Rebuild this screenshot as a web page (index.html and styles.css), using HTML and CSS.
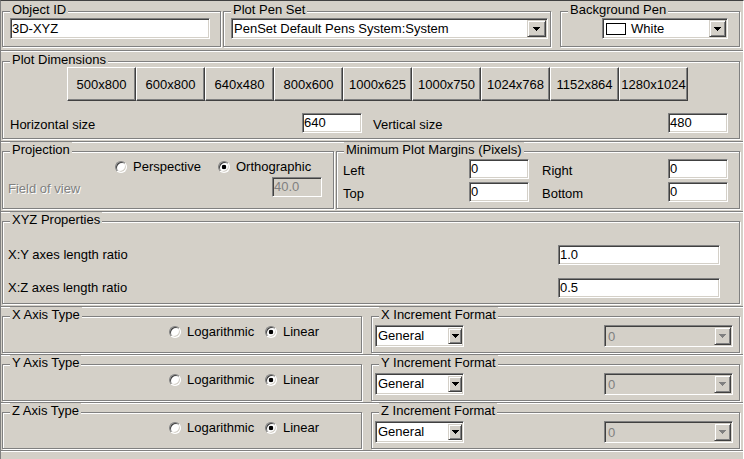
FILE: index.html
```html
<!DOCTYPE html>
<html>
<head>
<meta charset="utf-8">
<title>3D-XYZ Plot Properties</title>
<link rel="stylesheet" href="styles.css">
</head>
<body>
<div class="dialog">

  <div class="row r1">
    <div class="group g-objid">
      <div class="legend">Object ID</div>
      <div class="edit e-objid">3D-XYZ</div>
    </div>
    <div class="group g-penset">
      <div class="legend">Plot Pen Set</div>
      <div class="combo c-penset">
        <span class="val">PenSet Default Pens System:System</span>
        <span class="dd dd-18"><svg class="arrow" width="7" height="4" viewBox="0 0 7 4"><path d="M0 0h7v1H0zM1 1h5v1H1zM2 2h3v1H2zM3 3h1v1H3z"/></svg></span>
      </div>
    </div>
    <div class="group g-bgpen">
      <div class="legend">Background Pen</div>
      <div class="combo c-bgpen">
        <span class="val"><span class="swatch"></span>White</span>
        <span class="dd"><svg class="arrow" width="7" height="4" viewBox="0 0 7 4"><path d="M0 0h7v1H0zM1 1h5v1H1zM2 2h3v1H2zM3 3h1v1H3z"/></svg></span>
      </div>
    </div>
  </div>

  <div class="row r2">
    <div class="group g-full">
      <div class="legend">Plot Dimensions</div>
      <div class="btnrow">
        <div class="pbtn">500x800</div>
        <div class="pbtn">600x800</div>
        <div class="pbtn">640x480</div>
        <div class="pbtn">800x600</div>
        <div class="pbtn">1000x625</div>
        <div class="pbtn">1000x750</div>
        <div class="pbtn">1024x768</div>
        <div class="pbtn">1152x864</div>
        <div class="pbtn">1280x1024</div>
      </div>
      <div class="srow">
        <span class="lbl l-h">Horizontal size</span>
        <div class="edit e-size">640</div>
        <span class="lbl l-v">Vertical size</span>
        <div class="edit e-size">480</div>
      </div>
    </div>
  </div>

  <div class="row r3">
    <div class="group g-proj">
      <div class="legend">Projection</div>
      <div class="radios proj-radios">
        <span class="ritem r-persp"><span class="radio"></span>Perspective</span>
        <span class="ritem"><span class="radio on"></span>Orthographic</span>
      </div>
      <div class="fov">
        <span class="lbl disabled l-fov">Field of view</span>
        <div class="edit e-fov off">40.0</div>
      </div>
    </div>
    <div class="group g-marg">
      <div class="legend">Minimum Plot Margins (Pixels)</div>
      <div class="mrow ma">
        <span class="lbl l-m">Left</span>
        <div class="edit e-size">0</div>
        <span class="lbl l-m l-m2">Right</span>
        <div class="edit e-size">0</div>
      </div>
      <div class="mrow mb">
        <span class="lbl l-m">Top</span>
        <div class="edit e-size">0</div>
        <span class="lbl l-m l-m2">Bottom</span>
        <div class="edit e-size">0</div>
      </div>
    </div>
  </div>

  <div class="row r4">
    <div class="group g-full">
      <div class="legend">XYZ Properties</div>
      <div class="xrow xa">
        <span class="lbl l-x">X:Y axes length ratio</span>
        <div class="edit e-ratio">1.0</div>
      </div>
      <div class="xrow xb">
        <span class="lbl l-x">X:Z axes length ratio</span>
        <div class="edit e-ratio">0.5</div>
      </div>
    </div>
  </div>

  <div class="row r-axis">
    <div class="group g-axis">
      <div class="legend">X Axis Type</div>
      <div class="radios axis-radios">
        <span class="ritem r-log"><span class="radio"></span>Logarithmic</span>
        <span class="ritem"><span class="radio on"></span>Linear</span>
      </div>
    </div>
    <div class="group g-inc">
      <div class="legend">X Increment Format</div>
      <div class="inc-row">
        <div class="combo c-gen">
          <span class="val">General</span>
          <span class="dd dd-14"><svg class="arrow" width="7" height="4" viewBox="0 0 7 4"><path d="M0 0h7v1H0zM1 1h5v1H1zM2 2h3v1H2zM3 3h1v1H3z"/></svg></span>
        </div>
        <div class="combo c-dis off">
          <span class="val">0</span>
          <span class="dd"><svg class="arrow" width="7" height="4" viewBox="0 0 7 4"><path d="M0 0h7v1H0zM1 1h5v1H1zM2 2h3v1H2zM3 3h1v1H3z"/></svg></span>
        </div>
      </div>
    </div>
  </div>

  <div class="row r-axis">
    <div class="group g-axis">
      <div class="legend">Y Axis Type</div>
      <div class="radios axis-radios">
        <span class="ritem r-log"><span class="radio"></span>Logarithmic</span>
        <span class="ritem"><span class="radio on"></span>Linear</span>
      </div>
    </div>
    <div class="group g-inc">
      <div class="legend">Y Increment Format</div>
      <div class="inc-row">
        <div class="combo c-gen">
          <span class="val">General</span>
          <span class="dd dd-14"><svg class="arrow" width="7" height="4" viewBox="0 0 7 4"><path d="M0 0h7v1H0zM1 1h5v1H1zM2 2h3v1H2zM3 3h1v1H3z"/></svg></span>
        </div>
        <div class="combo c-dis off">
          <span class="val">0</span>
          <span class="dd"><svg class="arrow" width="7" height="4" viewBox="0 0 7 4"><path d="M0 0h7v1H0zM1 1h5v1H1zM2 2h3v1H2zM3 3h1v1H3z"/></svg></span>
        </div>
      </div>
    </div>
  </div>

  <div class="row r-axis">
    <div class="group g-axis">
      <div class="legend">Z Axis Type</div>
      <div class="radios axis-radios">
        <span class="ritem r-log"><span class="radio"></span>Logarithmic</span>
        <span class="ritem"><span class="radio on"></span>Linear</span>
      </div>
    </div>
    <div class="group g-inc">
      <div class="legend">Z Increment Format</div>
      <div class="inc-row">
        <div class="combo c-gen">
          <span class="val">General</span>
          <span class="dd dd-14"><svg class="arrow" width="7" height="4" viewBox="0 0 7 4"><path d="M0 0h7v1H0zM1 1h5v1H1zM2 2h3v1H2zM3 3h1v1H3z"/></svg></span>
        </div>
        <div class="combo c-dis off">
          <span class="val">0</span>
          <span class="dd"><svg class="arrow" width="7" height="4" viewBox="0 0 7 4"><path d="M0 0h7v1H0zM1 1h5v1H1zM2 2h3v1H2zM3 3h1v1H3z"/></svg></span>
        </div>
      </div>
    </div>
  </div>

  <div class="row r-end"></div>
</div>
</body>
</html>
```

FILE: styles.css
```css
* { box-sizing: border-box; }

html, body {
  margin: 0;
  padding: 0;
}

body {
  width: 744px;
  height: 459px;
  overflow: hidden;
  background: #D4D0C8;
  color: #000;
  font-family: "Liberation Sans", Arial, sans-serif;
  font-size: 13px;
}

.dialog {
  height: 459px;
  display: flex;
  flex-direction: column;
  border-top: 1px solid #404040;
  border-left: 1px solid #808080;
  border-right: 1px solid #ffffff;
}

/* ---------- rows ---------- */
.row {
  display: flex;
  flex: none;
  padding: 9px 3px 2px 1px;
  border-top: 1px solid #808080;
  box-shadow: inset 0 1px 0 #ffffff;
}
.r1 { height: 49px; padding-top: 10px; padding-bottom: 3px; border-top: none; box-shadow: none; }
.r2 { height: 91px; padding-top: 10px; }
.r3 { height: 70px; }
.r4 { height: 95px; }
.r-axis { height: 48px; padding-bottom: 1px; }
.r-end { flex: 1; }

/* ---------- group boxes ---------- */
.group {
  display: flex;
  flex-direction: column;
  border: 1px solid #808080;
  box-shadow: inset 1px 1px 0 #ffffff, 1px 1px 0 #ffffff;
}
.legend {
  align-self: flex-start;
  height: 15px;
  line-height: 15px;
  margin: -10px 0 0 7px;
  padding: 0 2px;
  background: #D4D0C8;
  white-space: nowrap;
}

.g-objid { width: 219px; }
.g-penset { width: 328px; margin-left: 2px; }
.g-bgpen { width: 180px; margin-left: 9px; }
.g-full { flex: 1; }
.g-proj { width: 332px; }
.g-marg { width: 404px; margin-left: 2px; }
.g-axis { width: 360px; }
.g-inc { width: 369px; margin-left: 9px; }

/* ---------- edit boxes ---------- */
.edit {
  flex: none;
  height: 20px;
  line-height: 18px;
  padding: 0 1px;
  background: #ffffff;
  border: 1px solid;
  border-color: #808080 #ffffff #ffffff #808080;
  box-shadow: inset 1px 1px 0 #404040, inset -1px -1px 0 #D4D0C8;
  white-space: nowrap;
  overflow: hidden;
}
.edit.off {
  background: #D4D0C8;
  color: #808080;
}
.e-objid { width: 200px; height: 21px; line-height: 19px; margin: 1px 0 0 7px; }
.e-size { width: 60px; }
.e-fov { width: 50px; }
.e-ratio { width: 162px; }

/* ---------- combo boxes ---------- */
.combo {
  flex: none;
  display: flex;
  height: 21px;
  padding: 1px;
  background: #ffffff;
  border: 1px solid;
  border-color: #808080 #ffffff #ffffff #808080;
  box-shadow: inset 1px 1px 0 #404040, inset -1px -1px 0 #D4D0C8;
}
.combo .val {
  flex: 1;
  display: flex;
  align-items: center;
  line-height: 17px;
  padding-left: 1px;
  white-space: nowrap;
  overflow: hidden;
}
.dd {
  flex: none;
  width: 17px;
  display: flex;
  align-items: center;
  justify-content: center;
  background: #D4D0C8;
  border: 1px solid;
  border-color: #D4D0C8 #404040 #404040 #D4D0C8;
  box-shadow: inset 1px 1px 0 #ffffff, inset -1px -1px 0 #808080;
}
.dd-18 { width: 19px; }
.dd-14 { width: 14px; height: 16px; align-self: center; }
.arrow { display: block; fill: #000; shape-rendering: crispEdges; }

.c-penset { width: 317px; margin: 1px 0 0 7px; }
.c-bgpen { width: 126px; margin: 1px 0 0 41px; }
.c-bgpen .val { padding-left: 2px; }
.swatch {
  width: 20px;
  height: 12px;
  margin-right: 5px;
  border: 1px solid #000;
  background: #fff;
}
.c-gen { width: 89px; height: 22px; }
.c-gen .val { line-height: 18px; padding-left: 1px; }
.c-dis { width: 129px; height: 22px; background: #D4D0C8; }
.c-dis .val { color: #808080; padding-left: 2px; }
.c-dis .arrow { fill: #808080; }

/* ---------- push buttons ---------- */
.btnrow {
  display: flex;
  margin-left: 64px;
}
.pbtn {
  width: 69px;
  height: 34px;
  display: flex;
  align-items: center;
  justify-content: center;
  border: 1px solid;
  border-color: #ffffff #404040 #404040 #ffffff;
  box-shadow: inset -1px -1px 0 #808080;
  white-space: nowrap;
}

/* ---------- labels & rows ---------- */
.lbl {
  flex: none;
  height: 20px;
  line-height: 20px;
  padding-top: 2px;
  white-space: nowrap;
}
.lbl.disabled {
  color: #808080;
  text-shadow: 1px 1px 0 #ffffff;
}

.srow { display: flex; margin: 12px 0 0 7px; }
.l-h { width: 292px; }
.l-v { width: 295px; margin-left: 11px; }

.radios {
  display: flex;
  align-items: center;
  height: 15px;
  line-height: 15px;
}
.ritem { display: flex; align-items: center; white-space: nowrap; }
.radio {
  flex: none;
  width: 12px;
  height: 12px;
  margin-right: 6px;
  border-radius: 50%;
  border: 1px solid;
  border-color: #808080 #ffffff #ffffff #808080;
  box-shadow: inset 1px 1px 0 #404040, inset -1px -1px 0 #D4D0C8;
  background: #ffffff;
}
.radio.on {
  background: radial-gradient(circle, #000 0 2px, #fff 2.6px);
}
.proj-radios { margin: 2px 0 0 112px; }
.r-persp { width: 103px; }
.axis-radios { margin: 2px 0 0 166px; }
.r-log { width: 96px; }

.fov { display: flex; margin: 3px 0 0 5px; }
.l-fov { width: 264px; }

.mrow { display: flex; margin-left: 6px; }
.ma { margin-top: 2px; }
.mb { margin-top: 3px; }
.l-m { width: 126px; }
.l-m2 { margin-left: 13px; }

.xrow { display: flex; margin-left: 5px; }
.xa { margin-top: 18px; }
.xb { margin-top: 13px; }
.l-x { width: 550px; padding-top: 0; }

.inc-row {
  display: flex;
  justify-content: space-between;
  margin: 3px 6px 0 3px;
}
```
